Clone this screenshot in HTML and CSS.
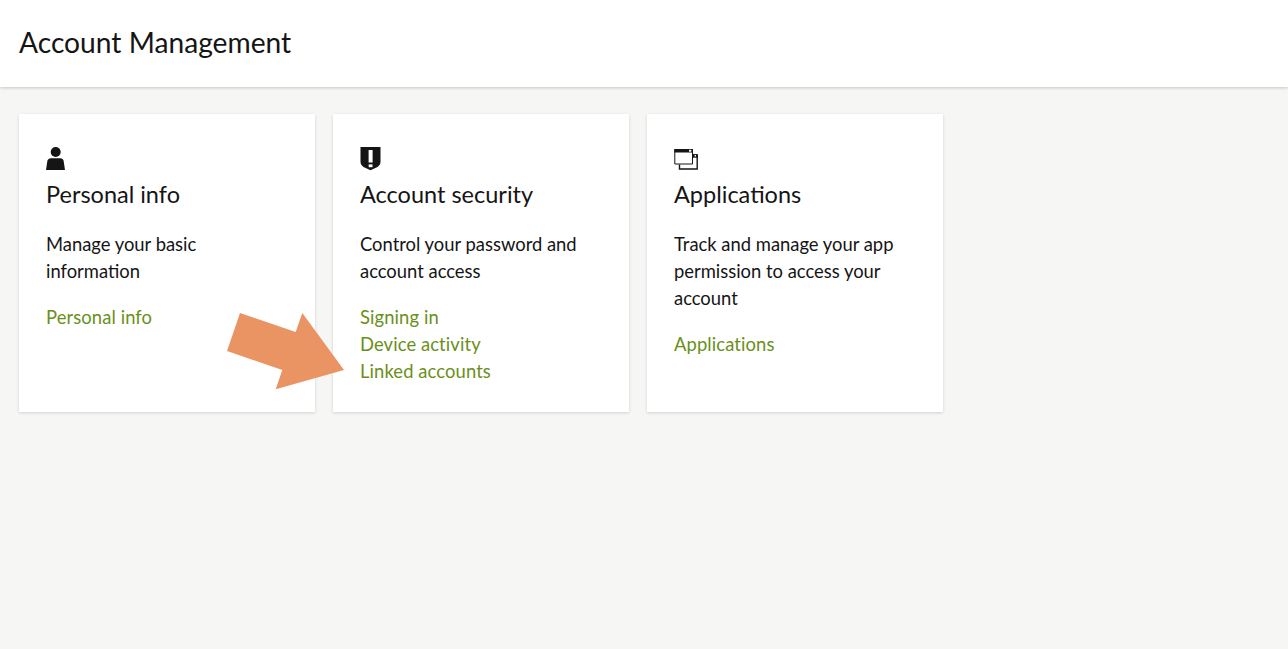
FILE: index.html
```html
<!DOCTYPE html>
<html lang="en">
<head>
<meta charset="utf-8">
<title>Account Management</title>
<link rel="stylesheet" href="styles.css">
</head>
<body>
<header class="topbar"><h1 class="page-title">Account Management</h1></header>
<main class="cards">
  <section class="card">
    <svg class="icon" viewBox="0 0 24 24" width="24" height="24"><circle cx="9.700" cy="5" r="5"/><path d="M5 11.200h9.400c1.800 0 2.800 1 3.200 2.500L19 23H0l1.400-9.300c.4-1.500 1.800-2.500 3.600-2.500z"/></svg>
    <h2 class="card-title">Personal info</h2>
    <p class="card-text">Manage your basic information</p>
    <a class="card-link" href="#">Personal info</a>
  </section>
  <section class="card">
    <svg class="icon" viewBox="0 0 24 24" width="24" height="24"><path d="M.5 0h20v14.500c0 2.500-1 4-3 5.500l-7 3.300-7-3.300c-2-1.500-3-3-3-5.500z"/><rect x="8.600" y="3" width="4" height="12.500" fill="#fff"/><rect x="8.700" y="17.400" width="3.800" height="2.800" fill="#fff"/></svg>
    <h2 class="card-title">Account security</h2>
    <p class="card-text">Control your password and account access</p>
    <a class="card-link" href="#">Signing in</a>
    <a class="card-link" href="#">Device activity</a>
    <a class="card-link" href="#">Linked accounts</a>
  </section>
  <section class="card">
    <svg class="icon" viewBox="0 0 24 24" width="24" height="24"><path class="outline-thin" d="M.8 2.500h17.700v14.500H.8z"/><path d="M.3 2h18.700v3.500H.3z"/><path class="hole" d="M15 2.800h2.300v1.900H15z"/><path class="outline" d="M18.700 7.900h4.500v14.100H5.500v-4.500"/><path d="M18.700 7.300h5v3.400h-5z"/><path class="hole" d="M20.600 8h1.400v1.400h-1.400z"/></svg>
    <h2 class="card-title">Applications</h2>
    <p class="card-text">Track and manage your app permission to access your account</p>
    <a class="card-link" href="#">Applications</a>
  </section>
</main>
<svg class="callout" viewBox="0 0 1288 649" width="1288" height="649" aria-hidden="true"><polygon points="240,313 295.700,332 302.300,313 344,370 275.700,389.300 282.300,370 227,351"/></svg>
</body>
</html>
```
FILE: styles.css
```css
* { box-sizing: border-box; }
html, body { margin: 0; height: 100%; }
body {
  background: #f6f6f5;
  color: #151515;
  font-family: "Lato", "Liberation Sans", sans-serif;
  overflow: hidden;
}
.topbar {
  height: 87px;
  background: #fff;
  box-shadow: 0 1px 3px rgba(3, 3, 3, 0.2);
  padding: 0 19px 4px;
  display: flex;
  align-items: center;
}
.page-title {
  margin: 0;
  font-size: 28.200px;
  font-weight: 400;
}
.cards {
  display: flex;
  gap: 18px;
  padding: 27px 19px;
}
.card {
  width: 296px;
  height: 298px;
  background: #fff;
  box-shadow: 0 1px 3px rgba(3, 3, 3, 0.15);
  padding: 33px 27px 0;
  display: flex;
  flex-direction: column;
  align-items: flex-start;
}
.icon { display: block; fill: #151515; margin-bottom: 7px; }
.icon .outline { fill: none; stroke: #151515; stroke-width: 1.400; }
.icon .outline-thin { fill: #fff; stroke: #151515; stroke-width: 1; }
.icon .hole { fill: #fff; }
.card-title {
  margin: 0 0 21px;
  font-size: 23.500px;
  line-height: 32px;
  font-weight: 400;
}
.card-text {
  margin: 0 0 19px;
  font-size: 18.400px;
  line-height: 27px;
}
.card-link {
  color: #6a8f1a;
  font-size: 18.400px;
  line-height: 27px;
  letter-spacing: 0.1px;
  text-decoration: none;
}
.callout {
  position: absolute;
  top: 0;
  left: 0;
  pointer-events: none;
  fill: #ea9463;
}
```
